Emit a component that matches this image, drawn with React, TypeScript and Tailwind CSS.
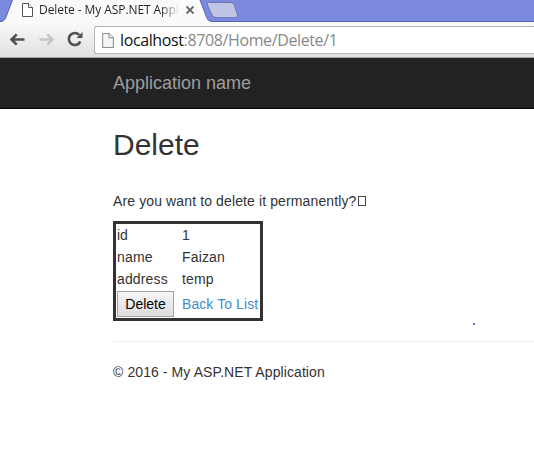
import type { ReactNode } from "react";

function PageIcon({ className, stroke, fill }: { className: string; stroke: string; fill: string }) {
  return (
    <svg className={className} viewBox="0 0 11 14" fill={fill} stroke={stroke}>
      <path d="M0.5 0.5H6.5L10.5 4.5V13.5H0.5Z" />
      <path d="M6.5 0.5V4.5H10.5" />
    </svg>
  );
}

function TabStrip() {
  return (
    <div className="relative h-[22px] bg-[#7b8ade]">
      <svg className="absolute inset-0 h-[22px] w-[534px]" viewBox="0 0 534 22" fill="none">
        <path d="M0 22C3 22 5 20 6 17L12.500 0H200L206.500 17C207.500 20 209 21.500 213 22Z" fill="#fafafa" />
        <path d="M0 21.500C3 21.500 5 20 6 17L12.500 0M200 0L206.500 17C207.500 20 209 21.500 213 21.500H534" stroke="#5865ad" />
        <path d="M208.500 2.500H231Q233 2.500 234 4.500L237.500 15Q238 17.500 235.500 17.500H216Q213 17.500 212 15L207.500 5Q207 2.500 208.500 2.500Z" fill="#bfc5e2" stroke="#7079b7" />
      </svg>
      <div className="relative flex h-5 items-center pl-[22px]">
        <PageIcon className="h-[14px] w-[11px] shrink-0" stroke="#555555" fill="#ffffff" />
        <span className="ml-[6px] w-[141px] whitespace-nowrap bg-linear-to-r from-[#222] from-86% to-transparent bg-clip-text font-['Open_Sans',sans-serif] text-[12px] leading-5 tracking-[-0.08px] text-transparent">
          Delete - My ASP.NET Appl
        </span>
        <svg className="ml-[6px] h-2 w-2" viewBox="0 0 8 8" stroke="#606060" strokeWidth="1.8">
          <path d="M0.5 0.5L7.500 7.500M7.500 0.500L0.500 7.500" />
        </svg>
      </div>
    </div>
  );
}

function Toolbar() {
  return (
    <div className="flex h-9 items-start border-b border-[#a5a5a5] bg-linear-to-b from-[#fafafa] to-[#e0e0e0]">
      <svg className="ml-[9px] mt-[10px] h-[15px] w-4" viewBox="0 0 16 15" fill="none" stroke="#505050" strokeWidth="2.6">
        <path d="M15.500 7.500H2.500M7.700 2.300L2.500 7.500L7.700 12.700" />
      </svg>
      <svg className="ml-[14px] mt-[10px] h-[15px] w-4" viewBox="0 0 16 15" fill="none" stroke="#c6c6c6" strokeWidth="2.6">
        <path d="M0.500 7.500H13.500M8.300 2.300L13.500 7.500L8.300 12.700" />
      </svg>
      <svg className="ml-[12px] mt-[9px] h-4 w-4" viewBox="0 0 16 16" fill="none" stroke="#505050" strokeWidth="2.6">
        <path d="M13.300 10.500A6 6 0 1 1 12.300 4" />
        <path d="M15.500 1V7H9.500Z" fill="#505050" stroke="none" />
      </svg>
      <div className="ml-[11px] mt-1 flex h-7 flex-1 items-center rounded-l-[3px] border border-r-0 border-[#b4b4b4] bg-white pl-[7px]">
        <PageIcon className="h-[15px] w-3" stroke="#909090" fill="#f4f4f4" />
        <span className="ml-[6px] whitespace-nowrap font-['Open_Sans',sans-serif] text-[16px] leading-6 tracking-[-0.38px] text-[#888]">
          <span className="text-[#111]">localhost</span>:8708/Home/Delete/1
        </span>
      </div>
    </div>
  );
}

function Row({ label, children }: { label: ReactNode; children: ReactNode }) {
  return (
    <tr>
      <td className="w-[65px] p-px">{label}</td>
      <td className="p-px">{children}</td>
    </tr>
  );
}

export default function App() {
  return (
    <div className="h-[465px] w-[534px] overflow-hidden bg-white font-['Liberation_Sans',Arial,sans-serif] text-[14px] leading-5 text-[#333]">
      <TabStrip />
      <Toolbar />
      <nav className="h-[51px] border-b border-[#080808] bg-[#222] pl-[113px] pt-[15px] text-[18px] text-[#9d9d9d]">
        Application name
      </nav>
      <main className="relative pl-[113px]">
        <h2 className="pt-[19px] text-[30px] leading-[33px]">Delete</h2>
        <p className="mt-[30px] flex items-center whitespace-nowrap tracking-[0.12px]">
          Are you want to delete it permanently?
          <span className="ml-[2px] h-[10px] w-[8px] border border-[#444]" />
        </p>
        <table className="mt-[10px] w-[150px] table-fixed border-separate border-spacing-0 border-[3px] border-[#333]">
          <tbody>
            <Row label="id">1</Row>
            <Row label={<span className="tracking-[0.2px]">name</span>}>
              <span className="tracking-[0.15px]">Faizan</span>
            </Row>
            <Row label={<span className="tracking-[0.15px]">address</span>}>
              <span className="tracking-[0.15px]">temp</span>
            </Row>
            <Row
              label={
                <button className="block h-[26px] w-[57px] border border-[#a3a3a3] bg-linear-to-b from-[#f6f6f6] to-[#dddddd] text-black">
                  Delete
                </button>
              }
            >
              <a className="whitespace-nowrap tracking-[0.08px] text-[#428bca]">Back To List</a>
            </Row>
          </tbody>
        </table>
        <span className="absolute left-[473px] top-[214px] h-[2px] w-[2px] rounded-full bg-[#3a3acb]" />
        <hr className="mt-5 border-[#eee]" />
        <footer className="mt-5 tracking-[0.09px]">© 2016 - My ASP.NET Application</footer>
      </main>
    </div>
  );
}
